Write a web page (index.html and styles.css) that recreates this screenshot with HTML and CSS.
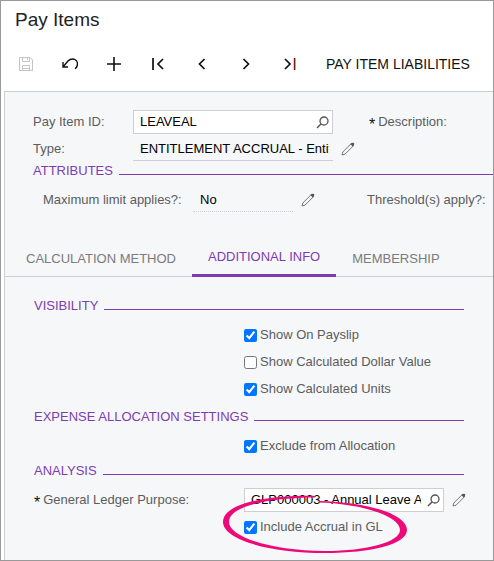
FILE: index.html
```html
<!DOCTYPE html>
<html lang="en">
<head>
  <meta charset="UTF-8">
  <title>Pay Items</title>
  <link rel="stylesheet" href="styles.css">
</head>
<body>

<svg class="symbols" aria-hidden="true">
  <symbol id="search" viewBox="0 0 13 13">
    <circle cx="8" cy="5" r="4" fill="none" stroke="#555" stroke-width="1.3"/>
    <path d="M5.2 7.8L1 12" fill="none" stroke="#555" stroke-width="1.5"/>
  </symbol>
  <symbol id="pencil" viewBox="0 0 14 14">
    <path d="M1 13L1.8 10L10 1.8L12.2 4L4 12.2Z" fill="none" stroke="#777" stroke-width="1"/>
    <path d="M9.4 2L10.800 .8L13.200 1L13 3.400L11.800 4.400Z" fill="#555"/>
  </symbol>
</svg>

<div class="window">
  <h1 class="title">Pay Items</h1>

  <div class="toolbar">
    <button class="tool" aria-label="Save" disabled>
      <svg width="16" height="16" viewBox="0 0 16 16"><path d="M1.500 1.500H12L14.500 4V14.500H1.500Z M4.500 1.500V5.500H11.500V1.500 M9.500 2V4 M4.500 14.500V9.500H11.500V14.500 M4 12.500H12" fill="none" stroke="#c4c4c4"/></svg>
    </button>
    <button class="tool" aria-label="Undo">
      <svg width="16" height="16" viewBox="0 0 16 16"><path d="M1 6V11H6 M1.200 10.800L6 5Q8.500 2.500 12 3.200Q15.500 4.500 15.500 8Q15.500 11 13 12.800" fill="none" stroke="#111" stroke-width="1.400"/></svg>
    </button>
    <button class="tool" aria-label="Add">
      <svg width="16" height="16" viewBox="0 0 16 16"><path d="M8 1V15M1 8H15" stroke="#111" stroke-width="1.600"/></svg>
    </button>
    <button class="tool" aria-label="First">
      <svg width="16" height="16" viewBox="0 0 16 16"><path d="M3 2V14M13 3L8 8L13 13" fill="none" stroke="#111" stroke-width="1.700"/></svg>
    </button>
    <button class="tool" aria-label="Previous">
      <svg width="16" height="16" viewBox="0 0 16 16"><path d="M10.500 3L5.500 8L10.500 13" fill="none" stroke="#111" stroke-width="1.700"/></svg>
    </button>
    <button class="tool" aria-label="Next">
      <svg width="16" height="16" viewBox="0 0 16 16"><path d="M5.500 3L10.500 8L5.500 13" fill="none" stroke="#111" stroke-width="1.700"/></svg>
    </button>
    <button class="tool" aria-label="Last">
      <svg width="16" height="16" viewBox="0 0 16 16"><path d="M3 3L8 8L3 13" fill="none" stroke="#111" stroke-width="1.700"/><path d="M12.600 2V14" stroke="#701818" stroke-width="1.600"/></svg>
    </button>
    <button class="action">PAY ITEM LIABILITIES</button>
  </div>

  <div class="panel">
    <div class="summary">
      <div class="row">
        <label class="label" for="itemId">Pay Item ID:</label>
        <div class="lookup">
          <input type="text" id="itemId" value="LEAVEAL">
          <button class="icon" aria-label="Find pay item"><svg width="13" height="13"><use href="#search"/></svg></button>
        </div>
        <span class="next required">Description:</span>
      </div>
      <div class="row">
        <label class="label" for="type">Type:</label>
        <input type="text" id="type" class="plain" value="ENTITLEMENT ACCRUAL - Entitlement" readonly>
        <button class="icon edit" aria-label="Edit type"><svg width="14" height="14"><use href="#pencil"/></svg></button>
      </div>
      <h2 class="heading">ATTRIBUTES</h2>
      <div class="row attributes">
        <label class="label wide" for="limit">Maximum limit applies?:</label>
        <input type="text" id="limit" class="plain dotted" value="No" readonly>
        <button class="icon edit" aria-label="Edit limit"><svg width="14" height="14"><use href="#pencil"/></svg></button>
        <span class="next">Threshold(s) apply?:</span>
      </div>
    </div>

    <div class="tabs" role="tablist">
      <button class="tab" role="tab">CALCULATION METHOD</button>
      <button class="tab active" role="tab" aria-selected="true">ADDITIONAL INFO</button>
      <button class="tab" role="tab">MEMBERSHIP</button>
    </div>

    <div class="details">
      <h2 class="heading">VISIBILITY</h2>
      <div class="group">
        <label class="check"><input type="checkbox" checked>Show On Payslip</label>
        <label class="check"><input type="checkbox">Show Calculated Dollar Value</label>
        <label class="check"><input type="checkbox" checked>Show Calculated Units</label>
      </div>
      <h2 class="heading">EXPENSE ALLOCATION SETTINGS</h2>
      <div class="group compact">
        <label class="check"><input type="checkbox" checked>Exclude from Allocation</label>
      </div>
      <h2 class="heading">ANALYSIS</h2>
      <div class="group">
        <div class="row">
          <label class="label purpose required" for="purpose">General Ledger Purpose:</label>
          <div class="lookup">
            <input type="text" id="purpose" value="GLP000003 - Annual Leave Accrual">
            <button class="icon" aria-label="Find purpose"><svg width="13" height="13"><use href="#search"/></svg></button>
          </div>
          <button class="icon edit" aria-label="Edit purpose"><svg width="14" height="14"><use href="#pencil"/></svg></button>
        </div>
        <div class="marked">
          <label class="check"><input type="checkbox" checked>Include Accrual in GL</label>
          <svg class="mark" width="186" height="60" viewBox="0 0 186 60">
            <path d="M92 1.800C60 1 1 6 1 28C1 45 45 59 103 59C150 59 185 50 185 36C185 20 145 8 97 7L97 8.600C140 10 178 22 178 36C178 48 145 57 103 57C50 57 7 43 7 28C7 10 55 3.500 92 3.400Z" fill="#ee0979"/>
          </svg>
        </div>
      </div>
    </div>
  </div>
</div>

</body>
</html>
```
FILE: styles.css
```css
* {
  box-sizing: border-box;
}
body {
  margin: 0;
  font-family: "Liberation Sans", Arial, sans-serif;
  font-size: 13px;
  line-height: 16px;
  color: #5c5c5c;
}
button, input {
  font: inherit;
}
button {
  padding: 0;
  border: none;
  background: none;
  cursor: pointer;
}
svg {
  display: block;
}
.symbols {
  position: absolute;
  width: 0;
  height: 0;
}
.window {
  display: flex;
  flex-direction: column;
  min-height: 100vh;
  padding-left: 3px;
  border: 1px solid #999;
  overflow: hidden;
}
.title {
  margin: 0;
  padding: 8px 11px 6px;
  font-size: 19px;
  line-height: 22px;
  font-weight: normal;
  color: #222;
}
.toolbar {
  display: flex;
  align-items: center;
  height: 54px;
}
.tool {
  display: flex;
  flex: none;
  align-items: center;
  justify-content: center;
  width: 44px;
  height: 36px;
}
.action {
  padding: 0 14px;
  font-size: 14px;
  color: #111;
  white-space: nowrap;
}
.panel {
  flex: 1;
  background-color: #f5f7f9;
  border-top: 1px solid #ccced1;
  border-left: 1px solid #ccced1;
}
.summary {
  padding: 18px 0 0 28px;
}
.row {
  display: flex;
  align-items: center;
  height: 24px;
  margin-bottom: 3px;
  white-space: nowrap;
}
.label {
  flex: none;
  width: 100px;
}
.wide {
  width: 150px;
}
.purpose {
  width: 210px;
}
.lookup {
  display: flex;
  align-items: center;
  width: 200px;
  height: 24px;
  padding: 0 3px 0 6px;
  background-color: #fff;
  border: 1px solid #ccced1;
}
.lookup input {
  flex: 1;
  min-width: 0;
  padding: 0;
  border: none;
  background: none;
  color: #000;
}
.lookup .icon {
  margin-left: 6px;
}
.plain {
  width: 200px;
  height: 24px;
  padding: 0 4px 0 7px;
  border: none;
  border-bottom: 1px solid #ccced1;
  background: none;
  color: #000;
}
.dotted {
  width: 100px;
  border-bottom: 1px dotted #ccced1;
}
.icon {
  flex: none;
}
.edit {
  margin-left: 8px;
}
.next {
  margin-left: 36px;
}
.attributes .next {
  margin-left: 52px;
}
.required::before {
  content: "*";
  margin-right: 3px;
  font-size: 16px;
  line-height: 1px;
  vertical-align: -4px;
  color: #111;
}
.heading {
  display: flex;
  align-items: center;
  gap: 6px;
  margin: 0;
  font-size: 13px;
  line-height: 14px;
  font-weight: normal;
  color: #7d3daf;
}
.heading::after {
  content: "";
  flex: 1;
  margin-top: 6px;
  border-top: 1px solid #7d3daf;
}
.attributes {
  padding-left: 10px;
  margin: 10px 0 0;
}
.tabs {
  display: flex;
  height: 37px;
  margin-top: 28px;
  padding-left: 5px;
  border-bottom: 1px solid #ccced1;
}
.tab {
  flex: none;
  height: 37px;
  padding: 0 16px;
  color: #7b7b7b;
}
.active {
  color: #7d3daf;
  border-bottom: 3px solid #7d3daf;
}
.details {
  padding: 22px 29px 10px;
}
.group {
  padding: 10px 0 6px;
}
.compact {
  padding-bottom: 3px;
}
.check {
  display: flex;
  align-items: center;
  gap: 3px;
  width: fit-content;
  height: 24px;
  margin: 0 0 3px 210px;
  white-space: nowrap;
}
.check input {
  width: 13px;
  height: 13px;
  margin: 0;
  accent-color: #0075ff;
}
.marked {
  position: relative;
}
/* hand drawn ring round the accrual option */
.mark {
  position: absolute;
  top: -21px;
  left: 188px;
  pointer-events: none;
}
```
